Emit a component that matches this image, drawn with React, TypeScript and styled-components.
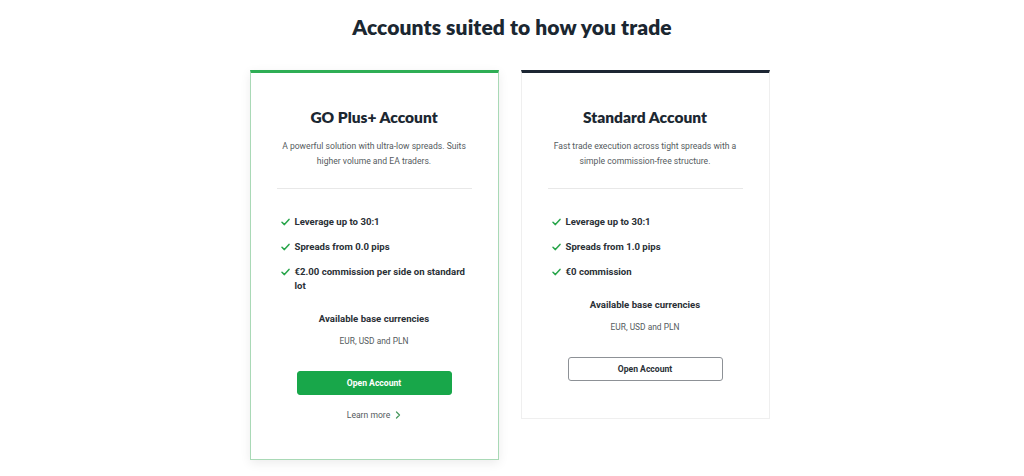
import styled, { createGlobalStyle } from "styled-components"

const GlobalStyle = createGlobalStyle`
	html, body {
		margin: 0;
		padding: 0;
		background: #fff;
	}
	body {
		font-family: Roboto, "Liberation Sans", sans-serif;
		color: #1c2630;
	}
`

type Plan = {
	name: string
	description: string[]
	features: string[][]
	currencies: string
	featured?: boolean
}

const plans: Plan[] = [
	{
		name: "GO Plus+ Account",
		description: [
			"A powerful solution with ultra-low spreads. Suits",
			"higher volume and EA traders.",
		],
		features: [
			["Leverage up to 30:1"],
			["Spreads from 0.0 pips"],
			["€2.00 commission per side on standard", "lot"],
		],
		currencies: "EUR, USD and PLN",
		featured: true,
	},
	{
		name: "Standard Account",
		description: [
			"Fast trade execution across tight spreads with a",
			"simple commission-free structure.",
		],
		features: [
			["Leverage up to 30:1"],
			["Spreads from 1.0 pips"],
			["€0 commission"],
		],
		currencies: "EUR, USD and PLN",
	},
]

const Check = () => (
	<svg width="9" height="8" viewBox="0 0 9 8" fill="none">
		<path
			d="M1 4.3 L3.4 6.6 L8 1.4"
			stroke="#27a54a"
			strokeWidth="1.5"
			strokeLinecap="round"
			strokeLinejoin="round"
		/>
	</svg>
)

const Chevron = () => (
	<svg width="6" height="8" viewBox="0 0 6 8" fill="none">
		<path
			d="M1.5 1 L4.5 4 L1.5 7"
			stroke="#4a9a60"
			strokeWidth="1.3"
			strokeLinecap="round"
			strokeLinejoin="round"
		/>
	</svg>
)

const App = () => {
	return (
		<>
			<GlobalStyle />
			<Page>
				<Heading>Accounts suited to how you trade</Heading>
				<Cards>
					{plans.map((plan) => (
						<Card key={plan.name} $featured={!!plan.featured}>
							<Title>{plan.name}</Title>
							<Description>
								{plan.description.map((line) => (
									<span key={line}>{line}</span>
								))}
							</Description>
							<Divider />
							<Features>
								{plan.features.map((lines) => (
									<Feature key={lines[0]}>
										<Tick>
											<Check />
										</Tick>
										<span>
											{lines.map((l, i) => (
												<span key={l}>
													{i > 0 && <br />}
													{l}
												</span>
											))}
										</span>
									</Feature>
								))}
							</Features>
							<CurrencyTitle>Available base currencies</CurrencyTitle>
							<CurrencyList>{plan.currencies}</CurrencyList>
							<OpenButton $featured={!!plan.featured}>Open Account</OpenButton>
							{plan.featured && (
								<LearnMore>
									Learn more <Chevron />
								</LearnMore>
							)}
						</Card>
					))}
				</Cards>
			</Page>
		</>
	)
}

const Page = styled.div`
	width: 1024px;
	height: 476px;
	overflow: hidden;
	box-sizing: border-box;
	padding-top: 14px;
	display: flex;
	flex-direction: column;
	align-items: center;
`

const Heading = styled.h1`
	margin: 0;
	font-family: Lato, "Noto Sans", sans-serif;
	font-weight: 800;
	font-size: 21px;
	line-height: 26px;
	color: #1b2731;
	letter-spacing: 0.1px;
`

const Cards = styled.div`
	margin-top: 30px;
	display: flex;
	align-items: flex-start;
	gap: 22px;
	padding-right: 5px;
`

const Card = styled.div<{ $featured: boolean }>`
	width: 249px;
	box-sizing: border-box;
	background: #fff;
	border: 1px solid ${(p) => (p.$featured ? "#a9d9b6" : "#efefef")};
	border-top: 3px solid ${(p) => (p.$featured ? "#2fae55" : "#1c2633")};
	box-shadow: ${(p) =>
		p.$featured ? "0 3px 10px rgba(0, 0, 0, 0.08)" : "none"};
	padding: 34px 26px 37px;
	display: flex;
	flex-direction: column;
	align-items: center;
`

const Title = styled.h2`
	margin: 0;
	font-family: Lato, "Noto Sans", sans-serif;
	font-weight: 800;
	font-size: 15.5px;
	line-height: 20px;
	color: #1b2731;
`

const Description = styled.p`
	margin: 12px 0 0;
	font-size: 8.6px;
	line-height: 15px;
	color: #555b60;
	text-align: center;
	display: flex;
	flex-direction: column;
	white-space: nowrap;
`

const Divider = styled.hr`
	align-self: stretch;
	margin: 19px 0 0;
	border: 0;
	border-top: 1px solid #e8e8e8;
	height: 0;
`

const Features = styled.ul`
	list-style: none;
	margin: 26px 0 0;
	padding: 0 0 0 4px;
	align-self: stretch;
	display: flex;
	flex-direction: column;
	gap: 11px;
`

const Feature = styled.li`
	display: flex;
	align-items: flex-start;
	gap: 5px;
	font-size: 9.6px;
	font-weight: 700;
	line-height: 14px;
	color: #2a3036;
`

const Tick = styled.span`
	display: flex;
	align-items: center;
	height: 14px;
	flex: none;
`

const CurrencyTitle = styled.div`
	margin-top: 18px;
	font-size: 9.6px;
	font-weight: 700;
	line-height: 16px;
	color: #2a3036;
`

const CurrencyList = styled.div`
	margin-top: 8px;
	font-size: 8.4px;
	line-height: 12px;
	color: #555b60;
`

const OpenButton = styled.button<{ $featured: boolean }>`
	margin-top: 24px;
	width: 155px;
	height: 24px;
	box-sizing: border-box;
	border-radius: 3px;
	font-family: Roboto, "Liberation Sans", sans-serif;
	font-size: 8.6px;
	font-weight: 700;
	cursor: pointer;
	background: ${(p) => (p.$featured ? "#18a74a" : "#fff")};
	color: ${(p) => (p.$featured ? "#fff" : "#2a3036")};
	border: 1px solid ${(p) => (p.$featured ? "#18a74a" : "#8d9196")};
`

const LearnMore = styled.a`
	margin-top: 13px;
	display: flex;
	align-items: center;
	gap: 5px;
	font-size: 8.6px;
	line-height: 14px;
	color: #555b60;
	cursor: pointer;
`

export default App
